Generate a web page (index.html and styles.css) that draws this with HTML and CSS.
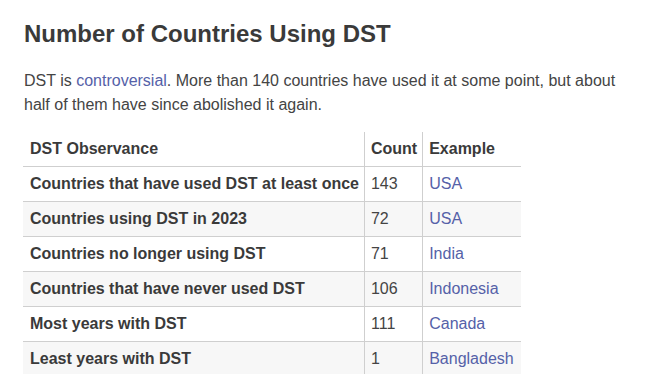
FILE: index.html
```html
<!DOCTYPE html>
<html>
<head>
<meta charset="utf-8">
<link rel="stylesheet" href="styles.css">
</head>
<body>
<div class="page">
  <h2 class="title">Number of Countries Using DST</h2>
  <p class="intro">DST is <a href="#">controversial</a>. More than 140 countries have used it at some point, but about half of them have since abolished it again.</p>
  <table class="dst">
    <thead>
      <tr><th>DST Observance</th><th>Count</th><th>Example</th></tr>
    </thead>
    <tbody>
      <tr><th>Countries that have used DST at least once</th><td>143</td><td><a href="#">USA</a></td></tr>
      <tr><th>Countries using DST in 2023</th><td>72</td><td><a href="#">USA</a></td></tr>
      <tr><th>Countries no longer using DST</th><td>71</td><td><a href="#">India</a></td></tr>
      <tr><th>Countries that have never used DST</th><td>106</td><td><a href="#">Indonesia</a></td></tr>
      <tr><th>Most years with DST</th><td>111</td><td><a href="#">Canada</a></td></tr>
      <tr><th>Least years with DST</th><td>1</td><td><a href="#">Bangladesh</a></td></tr>
    </tbody>
  </table>
</div>
</body>
</html>
```
FILE: styles.css
```css
html, body {
  margin: 0;
  padding: 0;
  background: #fff;
}
.page {
  padding: 18px 24px 0 24px;
  font-family: "Liberation Sans", Arial, sans-serif;
  color: #444;
}
.title {
  margin: 0;
  font-size: 24px;
  line-height: 32px;
  font-weight: bold;
  color: #3a3a3a;
}
.intro {
  margin: 19px 0 0 0;
  font-size: 16px;
  line-height: 24px;
  color: #444;
}
a {
  color: #5561a8;
  text-decoration: none;
}
.dst {
  margin: 15px 0 0 -1px;
  border-collapse: collapse;
  font-size: 16px;
  line-height: 22px;
}
.dst th, .dst td {
  padding: 6px 5px 6px 6px;
  text-align: left;
  border-bottom: 1px solid #cfcfcf;
  border-left: 1px solid #cfcfcf;
  color: #444;
}
.dst th {
  font-weight: bold;
  color: #3a3a3a;
}
.dst tr > :first-child {
  border-left: none;
  padding-left: 7px;
}
.dst tr > :last-child {
  padding-right: 7px;
}
.dst tbody tr:last-child > * {
  border-bottom: none;
}
.dst tbody tr:nth-child(even) {
  background: #f7f7f7;
}
```
